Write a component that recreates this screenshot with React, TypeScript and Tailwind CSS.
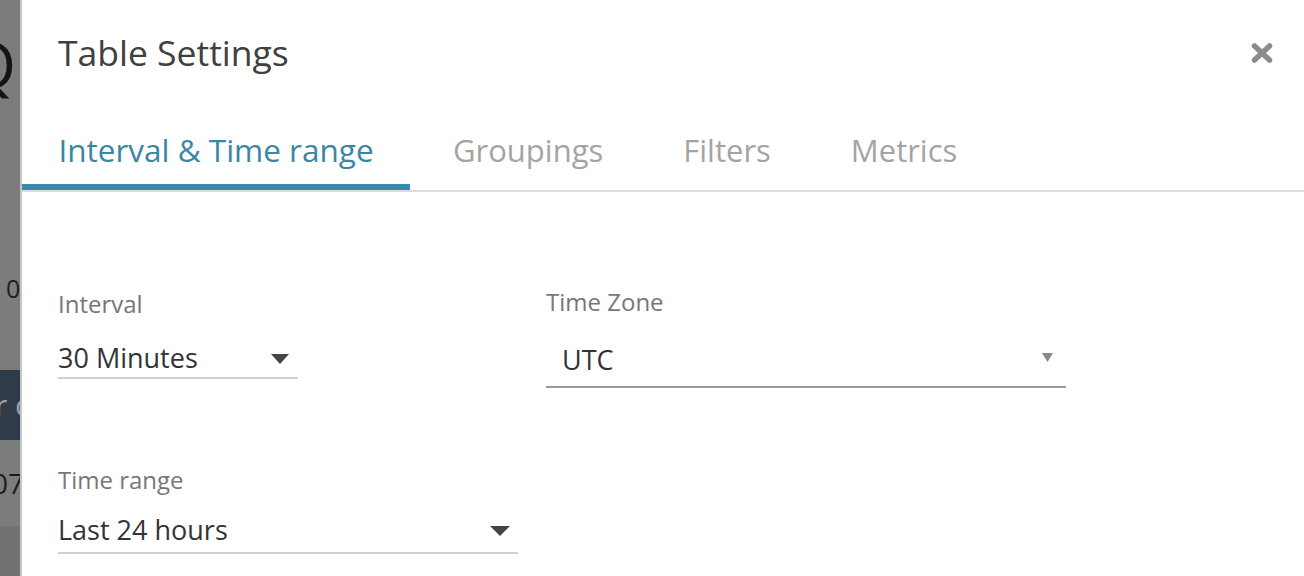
import type { ReactNode } from 'react';

const FONT = { fontFamily: '"Open Sans", "Noto Sans", sans-serif' };

const tabs = ['Interval & Time range', 'Groupings', 'Filters', 'Metrics'];

function Caret({ w, h, color }: { w: number; h: number; color: string }) {
  return (
    <svg width={w} height={h} viewBox={`0 0 ${w} ${h}`} aria-hidden="true">
      <polygon points={`0,0 ${w},0 ${w / 2},${h}`} fill={color} />
    </svg>
  );
}

function Field({ label, children, className }: { label: string; children: ReactNode; className?: string }) {
  return (
    <div className={className}>
      <div className="text-[24px] leading-[32px] text-[#777777]">{label}</div>
      {children}
    </div>
  );
}

/** Tira izquierda: trozo de la página de fondo tapada por el overlay. */
function Fondo() {
  return (
    <div className="flex h-[576px] w-[22px] shrink-0 flex-col overflow-hidden border-r-2 border-[#c6c6c6] bg-[#7c7c7c]">
      <div className="mt-[32px] flex h-[63px] justify-end pr-[4px] text-[63px] leading-[63px] whitespace-nowrap text-[#141414]">
        Q
      </div>
      <div className="mt-[181px] h-[25px] pl-[6px] text-[25px] leading-[25px] whitespace-nowrap text-[#1e1e1e]">
        0
      </div>
      <div className="mt-[69px] flex h-[70px] items-center bg-[#2f3b48]">
        <span className="-ml-[5px] text-[30px] leading-[30px] whitespace-nowrap text-[#9aa2ab]">r c</span>
      </div>
      <div className="mt-[29px] h-[28px] -ml-[8px] text-[28px] leading-[28px] whitespace-nowrap text-[#1c1c1c]">
        07
      </div>
      <div className="mt-[29px] flex-1 bg-[#727272]" />
    </div>
  );
}

export default function App() {
  return (
    <div className="flex h-[576px] w-[1304px] overflow-hidden bg-white" style={FONT}>
      <Fondo />
      <section className="flex min-w-0 flex-1 flex-col bg-white">
        <header className="flex items-start justify-between pt-[28px] pr-[31px] pl-[36px]">
          <h2 className="text-[35.5px] leading-[48px] font-normal text-[#404040]">Table Settings</h2>
          <button aria-label="Cerrar" className="mt-[15px]">
            <svg width="22" height="20" viewBox="0 0 22 20" aria-hidden="true">
              <path d="M3.5 3 L18.5 17 M18.5 3 L3.5 17" stroke="#8c8c8c" strokeWidth="5.5" strokeLinecap="round" />
            </svg>
          </button>
        </header>

        <nav className="mt-[54px] flex border-b-2 border-[#dddddd]">
          {tabs.map((t, i) => (
            <div
              key={t}
              className={
                i === 0
                  ? 'flex w-[388px] justify-center border-b-[6px] border-[#3a8bab] pb-[14px] text-[31.5px] leading-[40px] text-[#3a87a5]'
                  : i === 1
                    ? 'ml-[3px] border-b-[6px] border-transparent px-[40px] pb-[14px] text-[31px] leading-[40px] text-[#a4a4a4]'
                    : 'border-b-[6px] border-transparent px-[40px] pb-[14px] text-[31px] leading-[40px] text-[#a4a4a4]'
              }
            >
              {t}
            </div>
          ))}
        </nav>

        <div className="px-[36px] pt-[96px]">
          <div className="flex items-start">
            <Field label="Interval" className="w-[240px]">
              <div className="mt-[20px] flex items-center justify-between border-b-2 border-[#d1d1d1] pr-[9px] pb-[1px]">
                <span className="text-[27px] leading-[36px] text-[#333333]">30 Minutes</span>
                <span className="mt-[2px]">
                  <Caret w={18} h={10} color="#444444" />
                </span>
              </div>
            </Field>
            <Field label="Time Zone" className="-mt-[2px] ml-[248px] w-[520px]">
              <div className="mt-[24px] flex items-center justify-between border-b-2 border-[#9a9a9a] pb-[8px] pl-[16px] pr-[13px]">
                <span className="text-[27px] leading-[36px] text-[#333333]">UTC</span>
                <span className="-mt-[6px]">
                  <Caret w={11} h={9} color="#888888" />
                </span>
              </div>
            </Field>
          </div>

          <Field label="Time range" className="mt-[76px] w-[460px]">
            <div className="mt-[16px] flex items-center justify-between border-b-2 border-[#d1d1d1] pr-[8px] pb-[4px]">
              <span className="text-[27px] leading-[36px] text-[#333333]">Last 24 hours</span>
              <span className="mt-[2px]">
                <Caret w={20} h={10} color="#444444" />
              </span>
            </div>
          </Field>
        </div>
      </section>
    </div>
  );
}
